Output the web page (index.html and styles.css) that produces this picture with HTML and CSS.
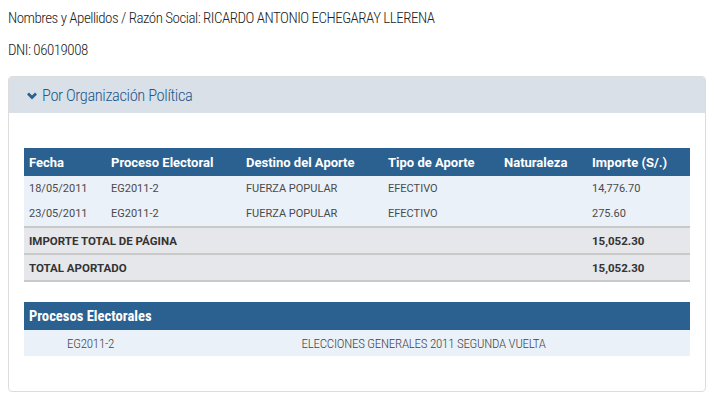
FILE: index.html
```html
<!DOCTYPE html>
<html lang="es">
<head>
<meta charset="utf-8">
<title>Aportes</title>
<link rel="stylesheet" href="styles.css">
</head>
<body>
<div class="page">
  <p class="info first">Nombres y Apellidos / Razón Social: RICARDO ANTONIO ECHEGARAY LLERENA</p>
  <p class="info">DNI: 06019008</p>

  <section class="panel">
    <div class="panel-heading">
      <svg class="chev" viewBox="0 0 10 8" width="10" height="8"><path d="M1 1.5 L5 5.5 L9 1.5" fill="none" stroke="#2b6190" stroke-width="2.8"/></svg>
      <span>Por Organización Política</span>
    </div>
    <div class="panel-body">
      <table class="grid">
        <colgroup>
          <col class="c1"><col class="c2"><col class="c3"><col class="c4"><col class="c5"><col class="c6">
        </colgroup>
        <thead>
          <tr><th>Fecha</th><th>Proceso Electoral</th><th>Destino del Aporte</th><th>Tipo de Aporte</th><th>Naturaleza</th><th>Importe (S/.)</th></tr>
        </thead>
        <tbody>
          <tr class="r1"><td>18/05/2011</td><td>EG2011-2</td><td>FUERZA POPULAR</td><td>EFECTIVO</td><td></td><td>14,776.70</td></tr>
          <tr class="r2"><td>23/05/2011</td><td>EG2011-2</td><td>FUERZA POPULAR</td><td>EFECTIVO</td><td></td><td>275.60</td></tr>
          <tr class="tot"><td colspan="5">IMPORTE TOTAL DE PÁGINA</td><td>15,052.30</td></tr>
          <tr class="tot last"><td colspan="5">TOTAL APORTADO</td><td>15,052.30</td></tr>
        </tbody>
      </table>

      <table class="procs">
        <colgroup><col class="p1"><col class="p2"></colgroup>
        <thead><tr><th colspan="2">Procesos Electorales</th></tr></thead>
        <tbody><tr><td>EG2011-2</td><td>ELECCIONES GENERALES 2011 SEGUNDA VUELTA</td></tr></tbody>
      </table>
    </div>
  </section>
</div>
</body>
</html>
```
FILE: styles.css
```css
html, body { margin: 0; padding: 0; background: #fff; }
.page {
  padding: 0 9px 0 8px;
  font-family: "Roboto Condensed", "Liberation Sans Narrow", "Roboto", sans-serif;
  color: #222;
}
.info {
  margin: 12px 0 0;
  font-size: 15px;
  letter-spacing: -0.5px;
  line-height: 20px;
  font-weight: 300;
}
.info.first { margin-top: 8px; }

.panel {
  margin-top: 16px;
  border: 1px solid #dcdcdc;
  border-radius: 4px;
  background: #fff;
}
.panel-heading {
  height: 36px;
  background: #d9e0e8;
  border-radius: 3px 3px 0 0;
  display: flex;
  align-items: center;
  gap: 5px;
  padding-left: 18px;
  font-size: 16.5px;
  letter-spacing: -0.4px;
  font-weight: 300;
  color: #24578a;
}
.chev { flex: none; margin-top: 1px; }

.panel-body { padding: 35px 15px 35px; }

table { border-collapse: collapse; width: 100%; table-layout: fixed; }
.grid { font-family: "Roboto", sans-serif; font-size: 11px; color: #4a4a4a; }
.c1 { width: 82px; } .c2 { width: 135px; } .c3 { width: 142px; }
.c4 { width: 116px; } .c5 { width: 88px; } .c6 { width: 103px; }

.grid th {
  background: #2b6190;
  color: #fff;
  font-weight: 700;
  font-size: 13px;
  text-align: left;
  height: 28px;
  padding: 0 5px;
}
.grid td { padding: 0 5px; background: #eaf1f9; text-align: left; }
.grid .r1 td { height: 24px; }
.grid .r2 td { height: 26px; }
.grid .tot td {
  background: #e5e7ea;
  border-top: 2px solid #c9c9c9;
  height: 25px;
  font-weight: 700;
  font-size: 11.5px;
  color: #333;
}
.grid .tot.last td { border-bottom: 2px solid #c9c9c9; }

.procs { margin-top: 20px; }
.p1 { width: 20%; } .p2 { width: 80%; }
.procs th {
  background: #2b6190;
  color: #fff;
  font-family: "Roboto Condensed", "Roboto", sans-serif;
  font-weight: 700;
  font-size: 14.6px;
  text-align: left;
  height: 28px;
  padding: 0 5px;
}
.procs td {
  background: #eaf1f9;
  height: 24px;
  text-align: center;
  font-size: 13px;
  letter-spacing: -0.25px;
  font-weight: 300;
  color: #444;
}
```
